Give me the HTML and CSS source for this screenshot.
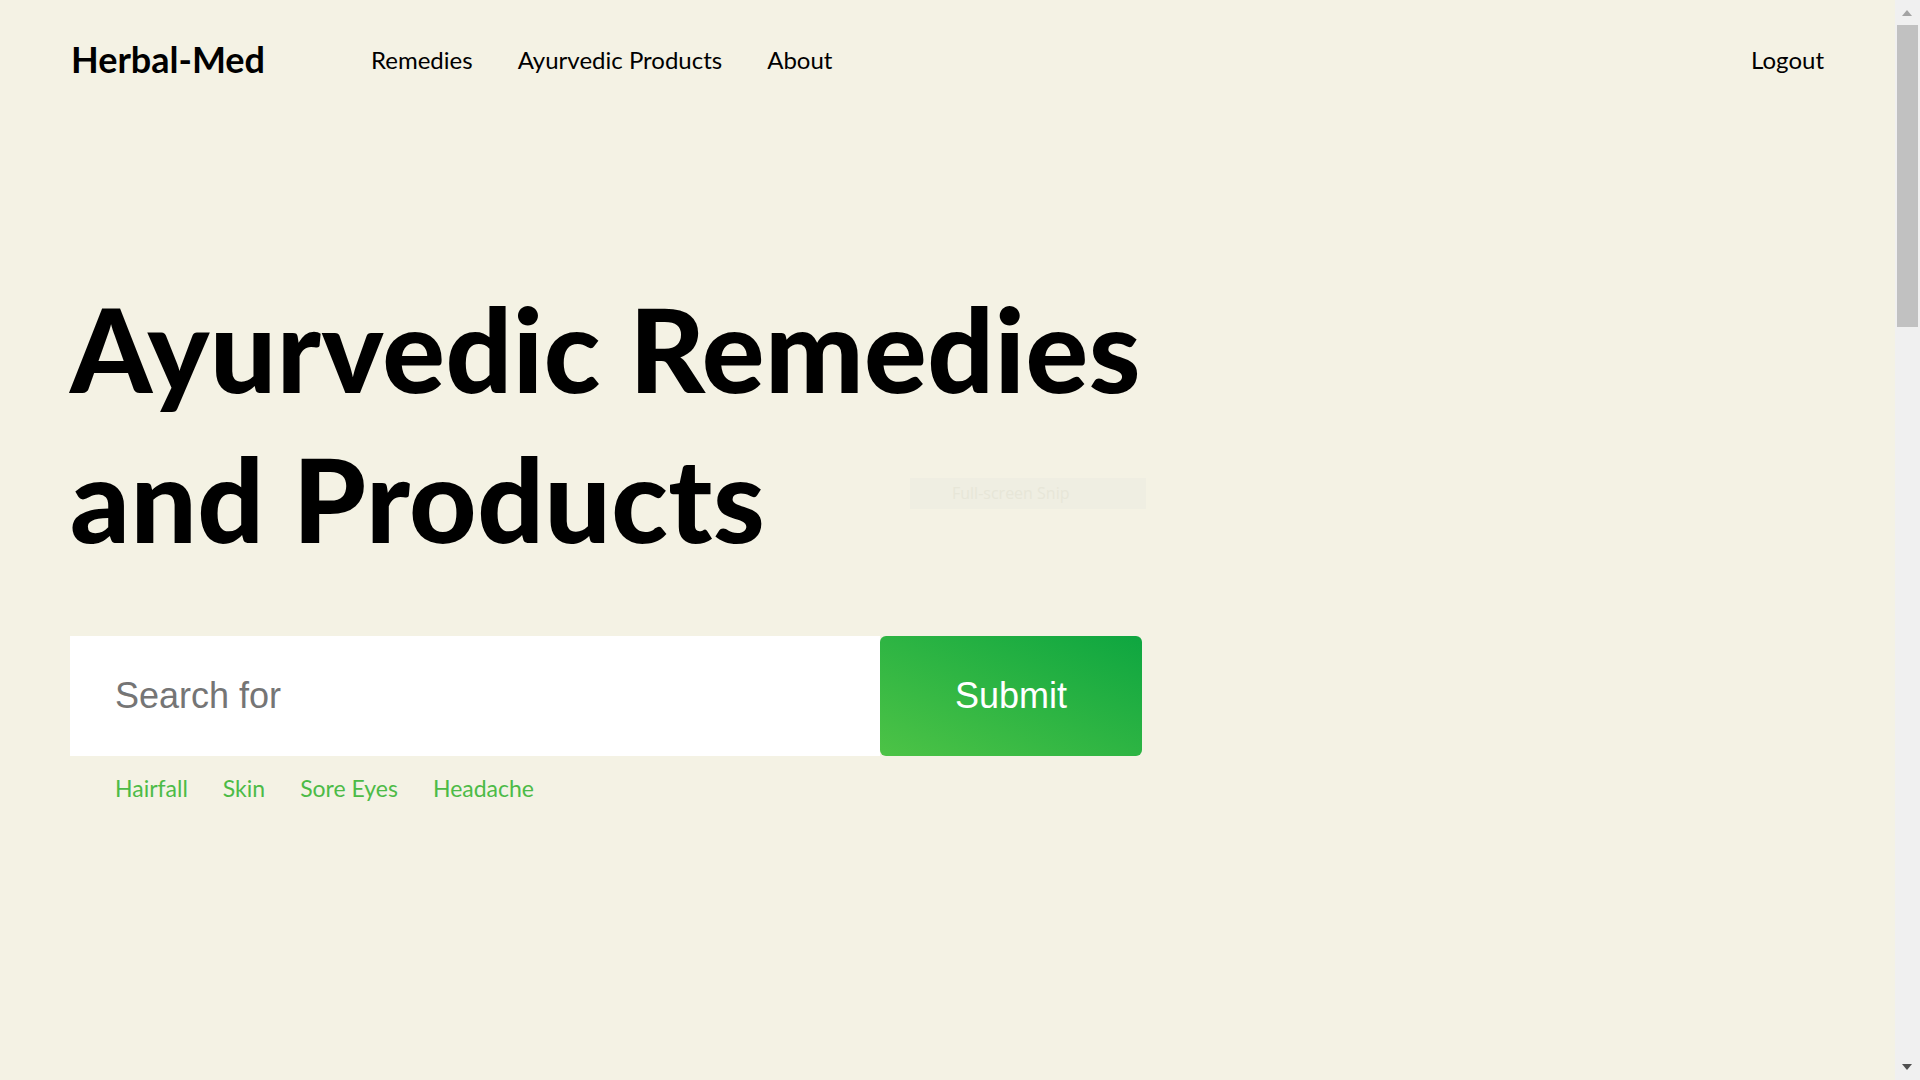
FILE: index.html
```html
<!DOCTYPE html>
<html lang="en">
<head>
<meta charset="utf-8">
<title>Herbal-Med</title>
<link rel="stylesheet" href="styles.css">
</head>
<body>
<div class="page">
  <header class="topbar">
    <a class="brand" href="#">Herbal-Med</a>
    <nav class="menu">
      <a href="#">Remedies</a>
      <a href="#">Ayurvedic Products</a>
      <a href="#">About</a>
    </nav>
    <a class="logout" href="#">Logout</a>
  </header>
  <main class="hero">
    <h1 class="title">Ayurvedic Remedies<br>and Products</h1>
    <form class="search" onsubmit="return false">
      <input class="search-input" type="text" placeholder="Search for">
      <button class="search-btn" type="submit">Submit</button>
    </form>
    <div class="tags">
      <a href="#">Hairfall</a>
      <a href="#">Skin</a>
      <a href="#">Sore Eyes</a>
      <a href="#">Headache</a>
    </div>
  </main>
  <div class="snip">Full-screen Snip</div>
</div>
<div class="scrollbar">
  <div class="arrow-up"></div>
  <div class="thumb"></div>
  <div class="arrow-down"></div>
</div>
</body>
</html>
```
FILE: styles.css
```css
* { box-sizing: border-box; }
html, body { margin: 0; padding: 0; }
body {
  background: #f4f2e4;
  font-family: "Lato", "Liberation Sans", sans-serif;
  color: #000;
  height: 1080px;
  overflow: hidden;
}
.page {
  width: calc(100% - 25px);
  position: relative;
}
.topbar {
  display: flex;
  align-items: center;
  height: 118px;
  padding: 0 71px 0 71px;
}
.topbar a { color: #000; text-decoration: none; }
.brand {
  font-weight: 700;
  font-size: 36px;
}
.menu {
  display: flex;
  gap: 45px;
  margin-left: 106px;
}
.menu a, .logout {
  font-size: 24px;
}
.logout { margin-left: auto; }

.hero {
  padding: 0 70px;
}
.title {
  margin: 155px 0 0 0;
  font-family: "Lato", sans-serif;
  font-weight: 900;
  font-size: 117px;
  line-height: 150px;
  letter-spacing: 0.5px;
}
.search {
  display: flex;
  width: 1072px;
  height: 120px;
  margin-top: 63px;
}
.search-input {
  flex: 1;
  border: 0;
  outline: none;
  background: #fff;
  padding: 0 0 0 45px;
  font-family: "Liberation Sans", Arial, sans-serif;
  font-size: 36px;
  color: #333;
}
.search-input::placeholder { color: #757575; }
.search-btn {
  width: 262px;
  border: 0;
  border-radius: 6px;
  background: linear-gradient(to top right, #4dc346 0%, #0ea640 100%);
  color: #fff;
  font-family: "Liberation Sans", Arial, sans-serif;
  font-size: 36px;
  cursor: pointer;
}
.tags {
  display: flex;
  gap: 35px;
  padding-left: 45px;
  margin-top: 18px;
}
.tags a {
  color: #4cbb47;
  text-decoration: none;
  font-size: 23px;
}
.snip {
  position: absolute;
  left: 910px;
  top: 478px;
  width: 236px;
  height: 31px;
  background: #efeee2;
  color: #e7e6d8;
  font-family: "Open Sans", sans-serif;
  font-size: 16px;
  line-height: 31px;
  padding-left: 42px;
}
.scrollbar {
  position: fixed;
  top: 0;
  right: 0;
  width: 25px;
  height: 100vh;
  background: #f0f0f0;
}
.thumb {
  position: absolute;
  left: 2px;
  right: 2px;
  top: 25px;
  height: 302px;
  background: #c1c1c1;
}
.arrow-up, .arrow-down {
  position: absolute;
  left: 7px;
  width: 0;
  height: 0;
  border-left: 5px solid transparent;
  border-right: 5px solid transparent;
}
.arrow-up {
  top: 10px;
  border-bottom: 6px solid #a3a3a3;
}
.arrow-down {
  bottom: 10px;
  border-top: 6px solid #505050;
}
```
